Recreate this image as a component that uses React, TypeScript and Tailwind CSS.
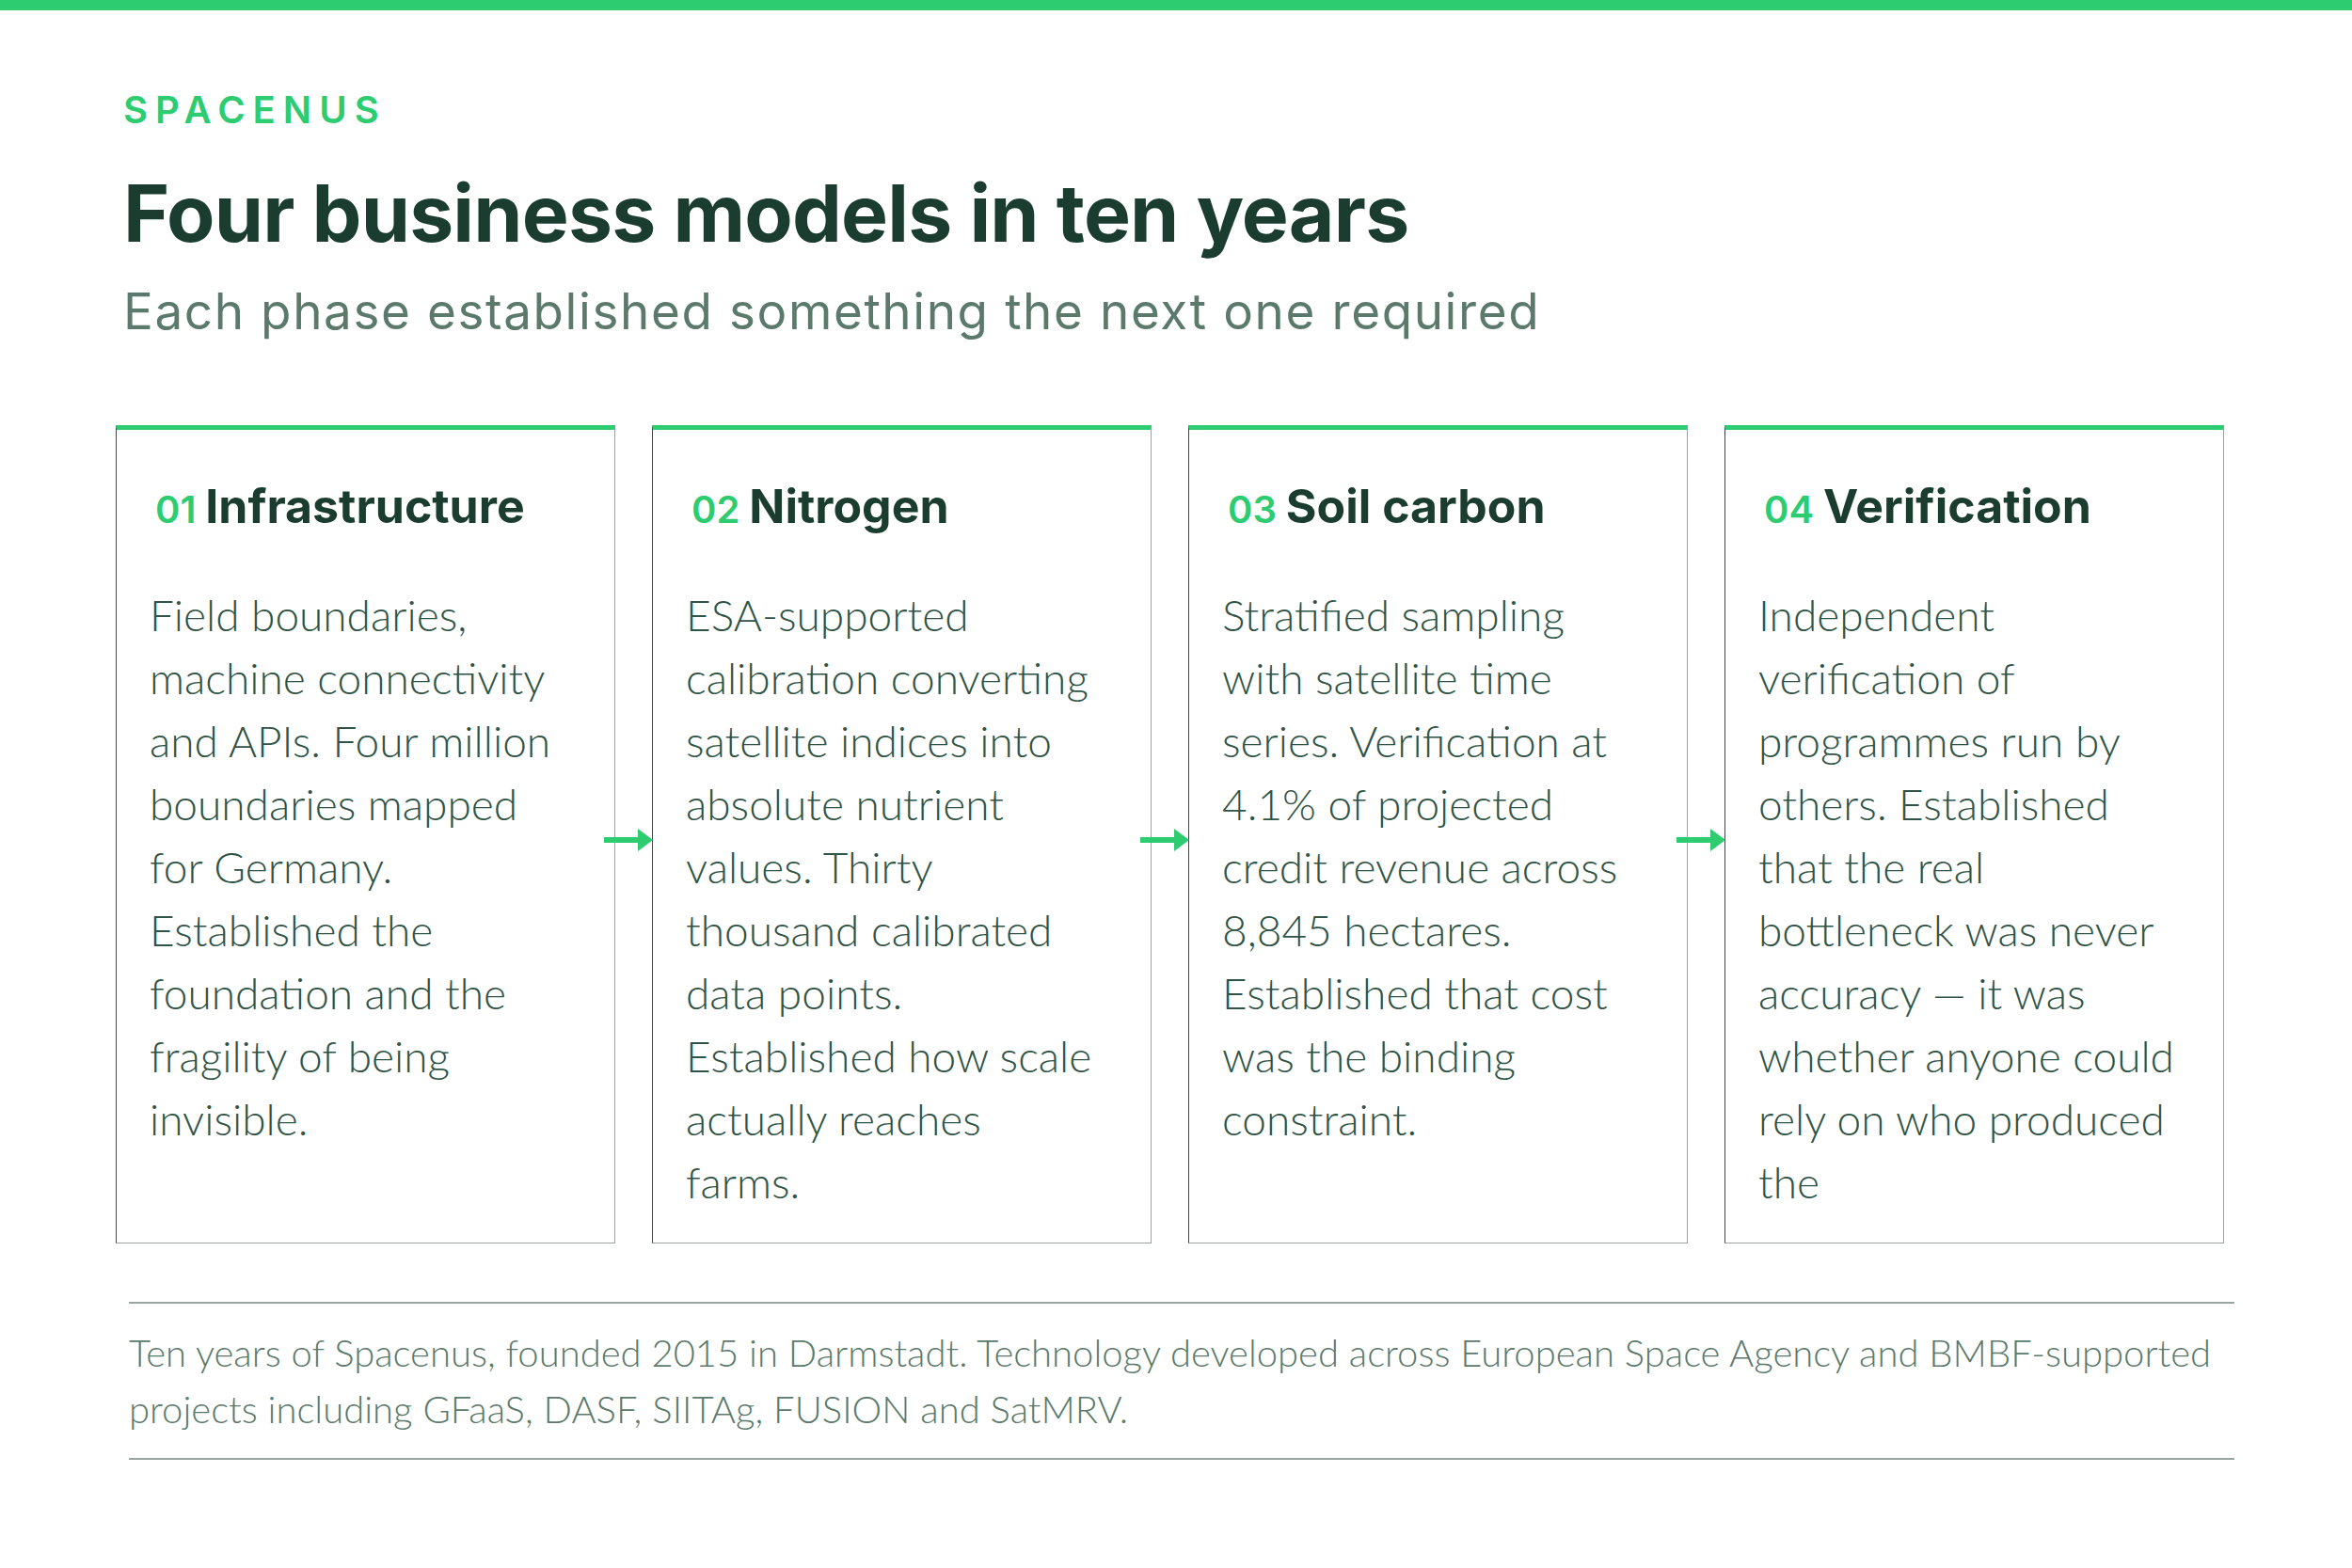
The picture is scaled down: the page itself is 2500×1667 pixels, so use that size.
const cards = [
  {
    n: "01",
    title: "Infrastructure",
    body: "Field boundaries, machine connectivity and APIs. Four million boundaries mapped for Germany. Established the foundation and the fragility of being invisible.",
  },
  {
    n: "02",
    title: "Nitrogen",
    body: "ESA-supported calibration converting satellite indices into absolute nutrient values. Thirty thousand calibrated data points. Established how scale actually reaches farms.",
  },
  {
    n: "03",
    title: "Soil carbon",
    body: "Stratified sampling with satellite time series. Verification at 4.1% of projected credit revenue across 8,845 hectares. Established that cost was the binding constraint.",
  },
  {
    n: "04",
    title: "Verification",
    body: "Independent verification of programmes run by others. Established that the real bottleneck was never accuracy — it was whether anyone could rely on who produced the",
  },
];

const Arrow = () => (
  <div className="absolute -left-[52px] top-[422px] z-10">
    <svg width="54" height="28" viewBox="0 0 54 28">
      <path d="M0 14 H40" stroke="#2ecc71" strokeWidth="6" />
      <path d="M36 2 L52 14 L36 26 Z" fill="#2ecc71" />
    </svg>
  </div>
);

export default function App() {
  return (
    <div className="w-[2500px] h-[1667px] bg-white relative" style={{ fontFamily: "Inter, 'Liberation Sans', sans-serif" }}>
      <div className="h-[11px] bg-[#2ecc71]" />
      <div className="pl-[131px] pt-[86px]">
        <div className="text-[40px] font-semibold tracking-[0.2em] text-[#2ecc71] leading-none">SPACENUS</div>
        <h1 className="mt-[48px] text-[84px] font-bold text-[#1b3d2f] leading-none tracking-[-0.01em]">
          Four business models in ten years
        </h1>
        <p className="mt-[36px] text-[53px] text-[#5b7a6b] leading-none tracking-[0.03em]">
          Each phase established something the next one required
        </p>
      </div>
      <div className="flex gap-[39px] pl-[123px] mt-[94px]">
        {cards.map((c, i) => (
          <div
            key={c.n}
            className="relative w-[531px] h-[870px] border border-[#9aa5a0] border-l-[#444] border-t-[5px] border-t-[#2ecc71] pl-[35px] pr-[50px] pt-[44px]"
          >
            {i > 0 && <Arrow />}
            <div className="flex items-baseline gap-[10px] pl-[6px]">
              <span className="text-[40px] font-semibold text-[#2ecc71]">{c.n}</span>
              <span className="text-[50px] font-bold text-[#1b3d2f]">{c.title}</span>
            </div>
            <p
              className="mt-[44px] text-[46px] leading-[67px] text-[#2f5446] font-light"
              style={{ fontFamily: "Lato, 'Open Sans', sans-serif" }}
            >
              {c.body}
            </p>
          </div>
        ))}
      </div>
      <div className="mx-[137px] w-[2238px] mt-[62px] border-t-2 border-b-2 border-[#9aa5a0] py-[22px]">
        <p
          className="text-[40px] leading-[60px] text-[#5b7a6b] font-light"
          style={{ fontFamily: "Lato, 'Open Sans', sans-serif" }}
        >
          Ten years of Spacenus, founded 2015 in Darmstadt. Technology developed across European Space Agency and BMBF-supported projects including GFaaS, DASF, SIITAg, FUSION and SatMRV.
        </p>
      </div>
    </div>
  );
}
